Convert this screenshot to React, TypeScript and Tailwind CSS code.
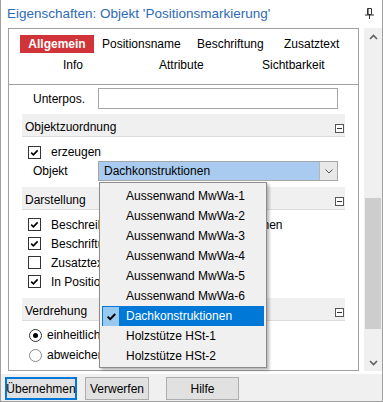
import React from "react";

const LISTE = [
  "Aussenwand MwWa-1",
  "Aussenwand MwWa-2",
  "Aussenwand MwWa-3",
  "Aussenwand MwWa-4",
  "Aussenwand MwWa-5",
  "Aussenwand MwWa-6",
  "Dachkonstruktionen",
  "Holzstütze HSt-1",
  "Holzstütze HSt-2",
];

function Haken({ className = "" }: { className?: string }) {
  return (
    <svg width="13" height="13" viewBox="0 0 13 13" className={className}>
      <path d="M2.6 6.6l2.6 2.6 5-5.2" fill="none" stroke="#000" strokeWidth="1.9" />
    </svg>
  );
}

function Checkbox({ checked }: { checked: boolean }) {
  return (
    <span className="flex h-[13px] w-[13px] shrink-0 items-center justify-center border border-[#333] bg-white">
      {checked && <Haken />}
    </span>
  );
}

function Radio({ checked }: { checked: boolean }) {
  return (
    <span
      className={`flex h-[13px] w-[13px] shrink-0 items-center justify-center rounded-full border bg-white ${
        checked ? "border-[#333]" : "border-[#888]"
      }`}
    >
      {checked && <span className="h-[5px] w-[5px] rounded-full bg-black" />}
    </span>
  );
}

function Minus() {
  return (
    <span className="mb-[3px] mr-[1px] flex h-[9px] w-[9px] items-center justify-center self-end border border-[#555] bg-white">
      <span className="h-px w-[5px] bg-[#333]" />
    </span>
  );
}

function Kopf({ titel }: { titel: string }) {
  return (
    <div className="flex h-[23px] items-center justify-between border-b border-[#dcdcdc] bg-[#f0f0f0] pl-[3px]">
      <span className="pt-[4px]">{titel}</span>
      <Minus />
    </div>
  );
}

function Chevron({ up }: { up?: boolean }) {
  return (
    <svg width="9" height="6" viewBox="0 0 9 6">
      <path
        d={up ? "M1 5l3.5-3.5L8 5" : "M1 1l3.5 3.5L8 1"}
        fill="none"
        stroke="#606060"
        strokeWidth="1.6"
      />
    </svg>
  );
}

export default function App() {
  return (
    <div className="relative flex h-[402px] w-[383px] flex-col border-x border-b border-[#a0a0a0] bg-white font-['Liberation_Sans',Arial,sans-serif] text-[12px] text-black">
      {/* Titel */}
      <div className="flex h-[28px] shrink-0 items-center justify-between pl-[6px] pr-[8px]">
        <span className="text-[13.5px] text-[#2d6bb5]">Eigenschaften: Objekt 'Positionsmarkierung'</span>
        <svg width="9" height="11" viewBox="0 0 9 11" className="mb-[2px]">
          <path d="M2.5 0.5h4v6h-4z" fill="none" stroke="#333" strokeWidth="1" />
          <path d="M3 1v5.5" stroke="#333" strokeWidth="1.2" />
          <path d="M0 7h9" stroke="#333" strokeWidth="1" />
          <path d="M4.5 7v4" stroke="#333" strokeWidth="1" />
        </svg>
      </div>

      {/* Mitte */}
      <div className="flex h-[343px] shrink-0">
        <div className="ml-[7px] flex h-full w-[351px] flex-col overflow-hidden border border-[#a0a0a0]">
          {/* Reiter */}
          <div className="h-[56px] shrink-0 border-b border-[#a0a0a0]">
            <div className="mt-[6px] flex h-[18px] items-center pl-[11px]">
              <span className="flex h-[18px] w-[74px] items-center justify-center bg-[#d13438] font-bold text-white">
                Allgemein
              </span>
              <span className="ml-[8px] w-[95px]">Positionsname</span>
              <span className="w-[87px]">Beschriftung</span>
              <span>Zusatztext</span>
            </div>
            <div className="mt-[3px] flex h-[18px] items-center pl-[54px]">
              <span className="w-[96px]">Info</span>
              <span className="w-[103px]">Attribute</span>
              <span>Sichtbarkeit</span>
            </div>
          </div>

          <div className="flex flex-col px-[13px]">
            <div className="mt-[3px] flex h-[21px] items-center">
              <span className="w-[76px] pl-[11px]">Unterpos.</span>
              <span className="h-[21px] w-[240px] border border-[#a6a6a6] bg-white" />
            </div>

            <div className="mt-[5px]">
              <Kopf titel="Objektzuordnung" />
            </div>
            <div className="mt-[6px] flex h-[18px] items-center pl-[6px]">
              <Checkbox checked />
              <span className="ml-[10px]">erzeugen</span>
            </div>
            <div className="flex h-[20px] items-center">
              <span className="w-[76px] pl-[11px]">Objekt</span>
              <div className="flex h-[20px] w-[240px] border border-[#a6a6a6]">
                <span className="flex flex-1 items-center bg-[#a9cbef] pl-[5px]">Dachkonstruktionen</span>
                <span className="flex w-[18px] items-center justify-center border-l border-[#b5b5b5] bg-[#e8e8e8]">
                  <svg width="8" height="5" viewBox="0 0 8 5">
                    <path d="M0.5 0.5l3.5 3.5 3.5-3.5" fill="none" stroke="#555" strokeWidth="1" />
                  </svg>
                </span>
              </div>
            </div>

            <div className="mt-[6px]">
              <Kopf titel="Darstellung" />
            </div>
            <div className="mt-[5px] flex flex-col pl-[6px]">
              {[
                ["Beschreibung aus dem Objekt übernehmen", true],
                ["Beschriftung anzeigen", true],
                ["Zusatztext anzeigen", false],
                ["In Positionsliste aufnehmen", true],
              ].map(([text, an]) => (
                <div key={text as string} className="flex h-[19px] items-center whitespace-nowrap">
                  <Checkbox checked={an as boolean} />
                  <span className="ml-[10px]">{text}</span>
                </div>
              ))}
            </div>

            <div className="mt-[7px]">
              <Kopf titel="Verdrehung" />
            </div>
            <div className="mt-[4px] flex flex-col pl-[7px]">
              <div className="flex h-[20px] items-center">
                <Radio checked />
                <span className="ml-[5px]">einheitlich</span>
              </div>
              <div className="flex h-[20px] items-center">
                <Radio checked={false} />
                <span className="ml-[5px]">abweichend</span>
              </div>
            </div>
          </div>
        </div>

        {/* Scrollleiste */}
        <div className="ml-[5px] flex h-full w-[18px] flex-col bg-[#f0f0f0]">
          <div className="flex h-[17px] items-center justify-center">
            <Chevron up />
          </div>
          <div className="flex-1 px-px">
            <div className="mt-[153px] h-[131px] bg-[#cdcdcd]" />
          </div>
          <div className="flex h-[17px] items-center justify-center">
            <Chevron />
          </div>
        </div>
      </div>

      {/* Knöpfe */}
      <div className="mt-[3px] flex h-[27px] shrink-0 items-start bg-[#f0f0f0] pl-[4px] pt-[3px]">
        <button className="flex h-[23px] w-[72px] items-center justify-center border-2 border-[#0078d7] bg-[#e1e1e1]">
          Übernehmen
        </button>
        <button className="ml-[8px] flex h-[23px] w-[64px] items-center justify-center border border-[#adadad] bg-[#e1e1e1]">
          Verwerfen
        </button>
        <button className="ml-[17px] flex h-[23px] w-[73px] items-center justify-center border border-[#adadad] bg-[#e1e1e1]">
          Hilfe
        </button>
      </div>

      {/* Aufgeklappte Liste */}
      <div className="absolute left-[98px] top-[182px] w-[168px] border border-[#8c8c8c] bg-[#f0f0f0] px-[2px] pb-px pt-[3px] shadow-[2px_2px_3px_rgba(0,0,0,0.3)]">
        {LISTE.map((eintrag) => {
          const aktiv = eintrag === "Dachkonstruktionen";
          return (
            <div
              key={eintrag}
              className={`flex h-[20px] items-center ${aktiv ? "bg-[#0078d7] text-white" : ""}`}
            >
              <span className="flex h-[19px] w-[16px] items-center justify-center ml-px">
                {aktiv && (
                  <span className="flex h-[19px] w-[16px] items-center justify-center bg-[#99c9ef]">
                    <Haken />
                  </span>
                )}
              </span>
              <span className="ml-[7px]">{eintrag}</span>
            </div>
          );
        })}
      </div>
    </div>
  );
}
